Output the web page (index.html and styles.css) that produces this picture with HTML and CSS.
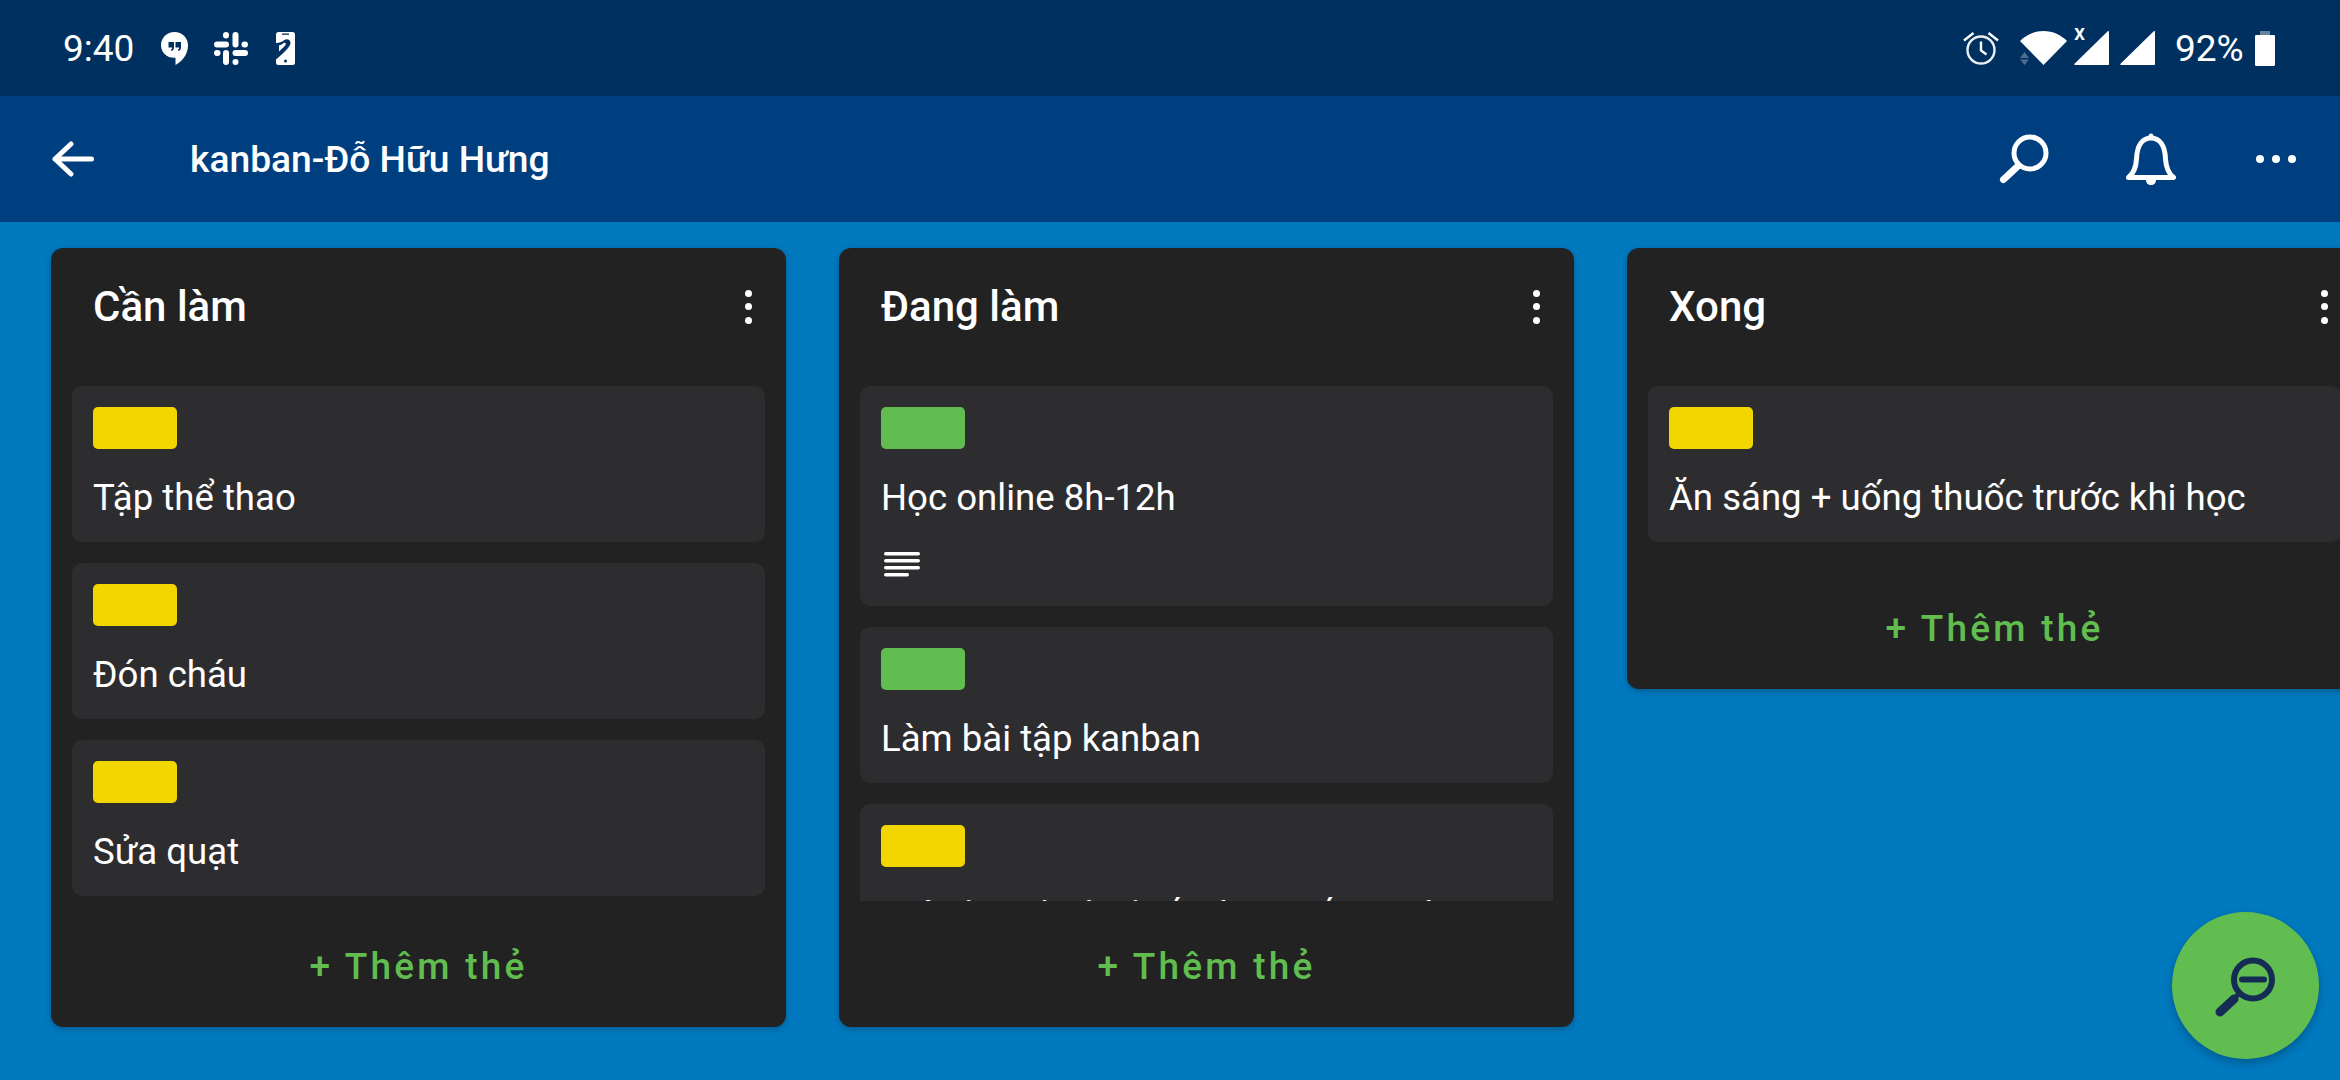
FILE: index.html
```html
<!DOCTYPE html>
<html lang="vi">
<head>
  <meta charset="utf-8">
  <title>kanban-Đỗ Hữu Hưng</title>
  <link rel="stylesheet" href="styles.css">
</head>
<body>

<!-- phone status bar -->
<div class="status-bar">
  <span class="time">9:40</span>
  <svg class="ic-hangouts" viewBox="0 0 27 33"><path fill="#fff" d="M13.500 0C6 0 0 5.800 0 13.200 0 20.500 6 25.800 13 25.800h1.500V33C21 29.500 27 22.500 27 13.200 27 5.800 21 0 13.500 0z"/><path fill="#00305f" d="M7.500 10h5.500v5.500c0 2-1.200 3.200-2.800 3.600v-1.900c.6-.2 1-.7 1-1.700H7.500zM14.500 10H20v5.500c0 2-1.200 3.200-2.800 3.600v-1.900c.6-.2 1-.7 1-1.700h-3.700z"/></svg>
  <svg class="ic-slack" viewBox="0 0 34 33" fill="#fff">
    <rect x="0" y="9.500" width="15" height="6" rx="3"/>
    <rect x="9" y="0" width="6" height="6.500" rx="3"/>
    <rect x="18.500" y="0" width="6" height="15.500" rx="3"/>
    <rect x="27.500" y="9.500" width="6.500" height="6" rx="3"/>
    <rect x="18.500" y="18" width="15.500" height="6" rx="3"/>
    <rect x="18.500" y="27" width="6" height="6" rx="3"/>
    <rect x="9" y="18" width="6" height="15" rx="3"/>
    <rect x="0" y="18" width="6.500" height="6" rx="3"/>
  </svg>
  <svg class="ic-phone" viewBox="0 0 19 33"><rect width="19" height="33" rx="2.500" fill="#fff"/><path fill="#00305f" d="M0 11C4 11 6.500 9.500 8 8.300 11 6 14.500 8 14.500 11 14.500 14.500 8 20.500 0 27.500zM0 0"/><path fill="#fff" d="M3 13.500C5 13 6.500 12 7.500 11 8.500 10.200 9.800 10.800 9.800 12 9.800 13 8 15 3 19.500z"/><rect x="6" y="1.500" width="7" height="1.300" fill="#00305f"/><circle cx="9.500" cy="29" r="1.500" fill="#00305f"/></svg>

  <div class="spacer"></div>

  <svg class="ic-alarm" viewBox="0 0 36 34" fill="none" stroke="#fff"><circle cx="18" cy="19" r="13.500" stroke-width="2.400" opacity=".92"/><path d="M18 10.500V19.500L23.500 23.500" stroke-width="2.400"/><path d="M1 9.500L10.500 2M35 9.500L25.500 2" stroke-width="2.400"/></svg>
  <svg class="ic-wifi" viewBox="0 0 47 34"><path fill="#fff" d="M0 10C6 4 14 0 23.500 0S41 4 47 10L23.500 34z"/><path fill="#fff" opacity=".3" d="M0 27l4.500-6 4.500 6zM0 28.500h9L4.500 34z"/></svg>
  <svg class="ic-signal" viewBox="0 0 35 34"><path fill="#fff" d="M34 0c.6 0 1 .4 1 1v32c0 .6-.4 1-1 1H1c-.8 0-1-.6-.5-1.200z"/></svg>
  <span class="sim-x">x</span>
  <svg class="ic-signal ic-signal2" viewBox="0 0 35 34"><path fill="#fff" d="M34 0c.6 0 1 .4 1 1v32c0 .6-.4 1-1 1H1c-.8 0-1-.6-.5-1.200z"/></svg>
  <span class="battery-text">92%</span>
  <svg class="ic-battery" viewBox="0 0 20 35"><path fill="#fff" opacity=".4" d="M5 0h10v4h5v4H0V4h5z"/><rect y="4" width="20" height="31" rx="1.500" fill="#fff"/></svg>
</div>

<!-- board header -->
<div class="app-bar">
  <svg class="ic-back" viewBox="0 0 42 36" fill="none" stroke="#fff" stroke-width="5" stroke-linecap="round" stroke-linejoin="round"><path d="M19 3L3 18L19 33M3 18H39.500"/></svg>
  <div class="board-title">kanban-Đỗ Hữu Hưng</div>
  <div class="spacer"></div>
  <svg class="ic-search" viewBox="0 0 50 50" fill="none" stroke="#fff"><circle cx="31" cy="19" r="16" stroke-width="5"/><path d="M19 32L4.500 45.500" stroke-width="7" stroke-linecap="round"/></svg>
  <svg class="ic-bell" viewBox="0 0 50 52" fill="none" stroke="#fff" stroke-width="5" stroke-linejoin="round"><path d="M2.500 44.500C8 40 10 35 10.500 26 11 13 16 5 25 5s14 8 14.500 21c.5 9 2.500 14 8 18.500z"/><circle cx="25" cy="3" r="2.500" fill="#fff" stroke="none"/><path d="M20 47h10c0 3-2 5-5 5s-5-2-5-5z" fill="#fff" stroke="none"/></svg>
  <div class="dots"><i></i><i></i><i></i></div>
</div>

<!-- the lists -->
<div class="board">

  <div class="list">
    <div class="list-head">
      <span class="list-title">Cần làm</span>
      <div class="kebab"><i></i><i></i><i></i></div>
    </div>
    <div class="cards">
      <div class="card"><div class="label yellow"></div><div class="card-text">Tập thể thao</div></div>
      <div class="card"><div class="label yellow"></div><div class="card-text">Đón cháu</div></div>
      <div class="card"><div class="label yellow"></div><div class="card-text">Sửa quạt</div></div>
    </div>
    <div class="add-card">+ Thêm thẻ</div>
  </div>

  <div class="list">
    <div class="list-head">
      <span class="list-title">Đang làm</span>
      <div class="kebab"><i></i><i></i><i></i></div>
    </div>
    <div class="cards">
      <div class="card">
        <div class="label green"></div>
        <div class="card-text">Học online 8h-12h</div>
        <svg class="ic-desc" viewBox="0 0 36 25" fill="#fff"><rect width="36" height="3.500" rx="1.700"/><rect y="7" width="36" height="3.500" rx="1.700"/><rect y="14" width="36" height="3.500" rx="1.700"/><rect y="21" width="25" height="3.500" rx="1.700"/></svg>
      </div>
      <div class="card"><div class="label green"></div><div class="card-text">Làm bài tập kanban</div></div>
      <div class="card"><div class="label yellow"></div><div class="card-text">Giúp bạn ôn lại kiến thức tiếng Anh</div></div>
    </div>
    <div class="add-card">+ Thêm thẻ</div>
  </div>

  <div class="list">
    <div class="list-head">
      <span class="list-title">Xong</span>
      <div class="kebab"><i></i><i></i><i></i></div>
    </div>
    <div class="cards">
      <div class="card"><div class="label yellow"></div><div class="card-text">Ăn sáng + uống thuốc trước khi học</div></div>
    </div>
    <div class="add-card">+ Thêm thẻ</div>
  </div>

</div>

<div class="fab">
  <svg viewBox="0 0 68 68" fill="none" stroke="#152c55"><circle cx="41" cy="27.500" r="19" stroke-width="6"/><path d="M30 27.500H52" stroke-width="6" stroke-linecap="round"/><path d="M28 41L22 46.500" stroke-width="5"/><path d="M22 47L8 60" stroke-width="9" stroke-linecap="round"/></svg>
</div>

</body>
</html>
```

FILE: styles.css
```css
*{
  box-sizing: border-box;
}

html, body{
  height: 100%;
}

body{
  margin: 0;
  width: 2340px;
  height: 1080px;
  overflow: hidden;
  display: flex;
  flex-direction: column;
  position: relative;
  font-family: Roboto, "Noto Sans", sans-serif;
  color: #fff;
  background-color: #0079bf;
}

svg{
  display: block;
  flex: none;
}

.spacer{
  flex: 1;
}

/* status bar ===================================== */

.status-bar{
  height: 96px;
  flex: none;
  display: flex;
  align-items: center;
  padding: 0 65px 0 63px;
  background-color: #00305f;
}

.time{
  font-size: 37px;
  width: 72px;
  white-space: nowrap;
}

.ic-hangouts{
  width: 27px;
  height: 33px;
  margin-left: 26px;
}

.ic-slack{
  width: 34px;
  height: 33px;
  margin-left: 26px;
}

.ic-phone{
  width: 19px;
  height: 33px;
  margin-left: 28px;
}

.ic-alarm{
  width: 36px;
  height: 34px;
}

.ic-wifi{
  width: 47px;
  height: 34px;
  margin-left: 21px;
}

.ic-signal{
  width: 35px;
  height: 34px;
  margin-left: 7px;
}

.ic-signal2{
  margin-left: 11px;
}

.sim-x{
  position: absolute;
  left: 2074px;
  top: 20px;
  font-size: 22px;
  font-weight: 500;
}

.battery-text{
  font-size: 37px;
  margin-left: 20px;
  width: 67px;
  white-space: nowrap;
}

.ic-battery{
  width: 20px;
  height: 35px;
  margin-left: 13px;
}

/* app bar ========================================= */

.app-bar{
  height: 126px;
  flex: none;
  display: flex;
  align-items: center;
  padding: 0 44px 0 52px;
  background-color: #003f7f;
}

.ic-back{
  width: 42px;
  height: 36px;
}

.board-title{
  font-size: 37.200px;
  font-weight: 500;
  margin-left: 96px;
}

.ic-search{
  width: 50px;
  height: 50px;
}

.ic-bell{
  width: 50px;
  height: 52px;
  margin-left: 77px;
}

.dots{
  display: flex;
  gap: 8px;
  margin-left: 80px;
}

.dots i{
  display: block;
  width: 8px;
  height: 8px;
  border-radius: 50%;
  background-color: #fff;
}

.kebab i{
  display: block;
  width: 7px;
  height: 7px;
  border-radius: 50%;
  background-color: #fff;
}

/* board =========================================== */

.board{
  flex: 1;
  min-height: 0;
  display: flex;
  align-items: flex-start;
  gap: 53px;
  padding: 26px 0 0 51px;
}

.list{
  flex: 0 0 735px;
  max-height: 779px;
  display: flex;
  flex-direction: column;
  background-color: #222222;
  border-radius: 12px;
  box-shadow: 0 2px 6px rgba(0,0,0,.25);
}

.list-head{
  height: 138px;
  flex: none;
  display: flex;
  justify-content: space-between;
  padding: 33px 34px 0 42px;
}

.list-title{
  font-size: 42px;
  font-weight: 500;
  line-height: 52px;
}

.kebab{
  display: flex;
  flex-direction: column;
  gap: 6.300px;
  padding-top: 9px;
}

.cards{
  flex: 1;
  min-height: 0;
  overflow: hidden;
  display: flex;
  flex-direction: column;
  gap: 21px;
  padding: 0 21px 21px;
}

.card{
  flex: none;
  background-color: #2d2d30;
  border-radius: 10px;
  padding: 21px 21px 20px;
}

.label{
  width: 84px;
  height: 42px;
  border-radius: 5px;
}

.yellow{
  background-color: #f2d600;
}

.green{
  background-color: #61bd4f;
}

.card-text{
  font-size: 36.600px;
  line-height: 48px;
  margin-top: 25px;
  white-space: nowrap;
}

.ic-desc{
  width: 36px;
  height: 25px;
  margin: 30px 0 9px 3px;
}

.add-card{
  height: 126px;
  flex: none;
  display: flex;
  align-items: center;
  justify-content: center;
  padding-top: 5px;
  font-size: 37px;
  font-weight: 500;
  letter-spacing: 3.200px;
  color: #61bd4f;
}

/* zoom button, floats over the board */
.fab{
  position: absolute;
  left: 2172px;
  top: 912px;
  width: 147px;
  height: 147px;
  border-radius: 50%;
  background-color: #61bd4f;
  box-shadow: 0 4px 10px rgba(0,0,0,.25);
  display: flex;
  align-items: center;
  justify-content: center;
}

.fab svg{
  width: 68px;
  height: 68px;
}
```
